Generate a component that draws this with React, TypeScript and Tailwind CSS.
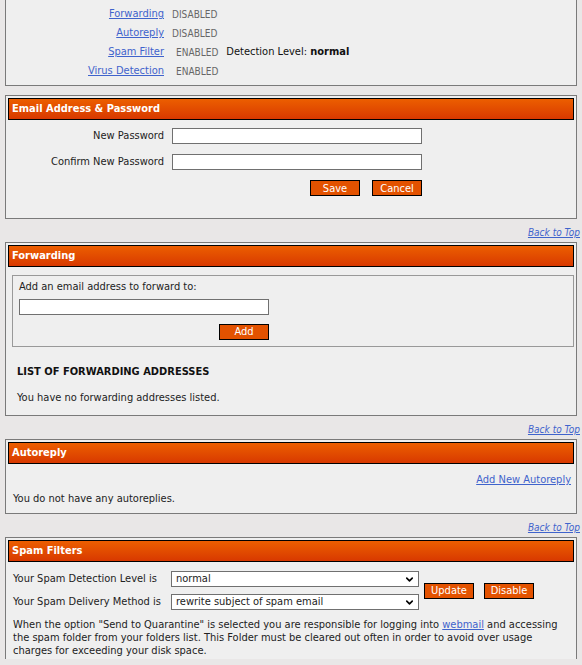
import { ChevronDown } from "lucide-react";

const font = { fontFamily: '"DejaVu Sans Condensed", "DejaVu Sans", sans-serif' };

function Header({ title }: { title: string }) {
  return (
    <div className="flex h-[22px] items-center border border-black bg-gradient-to-b from-[#ec5e00] to-[#d83800] pl-[3px] text-[11px] font-bold text-white">
      {title}
    </div>
  );
}

function Btn({ label, className = "" }: { label: string; className?: string }) {
  return (
    <button
      className={`flex h-[16px] w-[50px] items-center justify-center border border-black bg-[#e35200] text-[11px] leading-none text-white ${className}`}
    >
      {label}
    </button>
  );
}

function TextBox({ className = "" }: { className?: string }) {
  return <div className={`h-[16px] border border-[#707070] bg-white ${className}`} />;
}

function Dropdown({ value }: { value: string }) {
  return (
    <div className="flex h-[16px] w-[248px] items-center justify-between border border-[#707070] bg-white pl-[4px] pr-[3px] text-[11px] leading-[14px] text-[#222]">
      <span>{value}</span>
      <ChevronDown size={11} strokeWidth={3.5} className="text-black" />
    </div>
  );
}

function BackToTop() {
  return (
    <div className="flex h-[23px] items-start justify-end pr-[2px] pt-[8px]">
      <a className="text-[10px] leading-[12px] italic text-[#3f63cc] underline">Back to Top</a>
    </div>
  );
}

function Panel({ children, className = "" }: { children: React.ReactNode; className?: string }) {
  return <div className={`w-[572px] border border-[#7a7a7a] bg-[#efefef] p-[2px] ${className}`}>{children}</div>;
}

const status = [
  { name: "Forwarding", state: "DISABLED" },
  { name: "Autoreply", state: "DISABLED" },
  { name: "Spam Filter", state: "ENABLED", extra: true },
  { name: "Virus Detection", state: "ENABLED" },
];

export default function App() {
  return (
    <div className="h-[665px] w-[582px] overflow-hidden bg-[#e9e7e7] pl-[5px] text-[11px] text-[#222]" style={font}>
      {/* account summary */}
      <div className="w-[572px] border border-t-0 border-[#7a7a7a] bg-[#efefef] pb-[4px] pt-[5px]">
        {status.map((s) => (
          <div key={s.name} className="flex h-[19px] items-center">
            <a className="w-[158px] text-right text-[#3f63cc] underline">{s.name}</a>
            <span className={`text-[10px] text-[#666] ${s.state === "ENABLED" ? "ml-[12px]" : "ml-[8px]"}`}>
              {s.state}
            </span>
            {s.extra && (
              <span className="ml-[8px] text-[#111]">
                Detection Level: <b>normal</b>
              </span>
            )}
          </div>
        ))}
      </div>

      {/* password */}
      <Panel className="mt-[9px] h-[124px]">
        <Header title="Email Address & Password" />
        <div className="mt-[8px] flex flex-col gap-[10px]">
          <div className="flex h-[16px] items-center">
            <span className="w-[156px] text-right">New Password</span>
            <TextBox className="ml-[8px] w-[250px]" />
          </div>
          <div className="flex h-[16px] items-center">
            <span className="w-[156px] text-right">Confirm New Password</span>
            <TextBox className="ml-[8px] w-[250px]" />
          </div>
          <div className="flex w-[414px] justify-end gap-[12px]">
            <Btn label="Save" />
            <Btn label="Cancel" />
          </div>
        </div>
      </Panel>

      <BackToTop />

      {/* forwarding */}
      <Panel className="h-[174px]">
        <Header title="Forwarding" />
        <div className="ml-[4px] mt-[8px] h-[72px] w-[562px] border border-[#999] px-[6px] pt-[3px]">
          <div>Add an email address to forward to:</div>
          <TextBox className="mt-[3px] w-[250px]" />
          <div className="mt-[9px] flex w-[250px] justify-end">
            <Btn label="Add" />
          </div>
        </div>
        <div className="ml-[9px] mt-[17px] font-bold text-[#111]">LIST OF FORWARDING ADDRESSES</div>
        <div className="ml-[9px] mt-[9px]">You have no forwarding addresses listed.</div>
      </Panel>

      <BackToTop />

      {/* autoreply */}
      <Panel className="h-[75px]">
        <Header title="Autoreply" />
        <div className="mt-[8px] flex justify-end pr-[3px]">
          <a className="text-[#3f63cc] underline">Add New Autoreply</a>
        </div>
        <div className="ml-[5px] mt-[2px]">You do not have any autoreplies.</div>
      </Panel>

      <BackToTop />

      {/* spam filters */}
      <Panel className="border-b-0">
        <Header title="Spam Filters" />
        <div className="mt-[9px] flex items-center">
          <div className="flex flex-col gap-[7px]">
            <div className="flex h-[16px] items-center">
              <span className="ml-[5px] w-[158px]">Your Spam Detection Level is</span>
              <Dropdown value="normal" />
            </div>
            <div className="flex h-[16px] items-center">
              <span className="ml-[5px] w-[158px]">Your Spam Delivery Method is</span>
              <Dropdown value="rewrite subject of spam email" />
            </div>
          </div>
          <Btn label="Update" className="ml-[5px]" />
          <Btn label="Disable" className="ml-[10px]" />
        </div>
        <p className="ml-[5px] mt-[8px] w-[560px] leading-[13px]">
          When the option "Send to Quarantine" is selected you are responsible for logging into{" "}
          <a className="text-[#3f63cc] underline">webmail</a> and accessing the spam folder from your folders list.
          This Folder must be cleared out often in order to avoid over usage charges for exceeding your disk space.
        </p>
      </Panel>
    </div>
  );
}
